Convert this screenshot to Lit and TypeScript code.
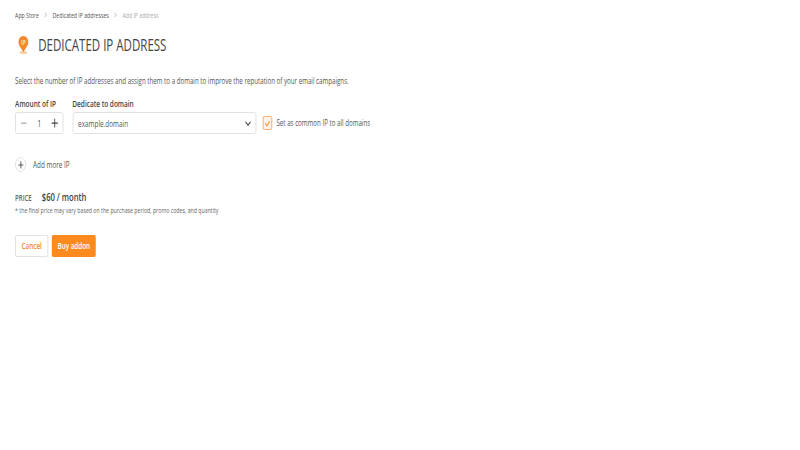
import { LitElement, html, css } from "lit";
import { customElement } from "lit/decorators.js";

@customElement("app-root")
export class AppRoot extends LitElement {
  static styles = css`
    :host { display: block; width: 800px; height: 450px; background: #fff; color: #444; font-family: "Open Sans", sans-serif; overflow: hidden; }
    .page { display: flex; flex-direction: column; align-items: flex-start; box-sizing: border-box; width: 1111px; padding: 10px 21px 0; transform: scale(.72, 1); transform-origin: 0 0; font-size: 9px; }
    .crumbs { display: flex; align-items: center; height: 10px; font-size: 7.2px; color: #555; gap: 7px; }
    .crumbs .last { color: #aaa; }
    .crumbs svg { width: 5px; height: 6px; }
    .head { display: flex; align-items: center; gap: 13px; margin-top: 15px; height: 20px; margin-left: 4px; }
    .head h1 { margin: 0; font-size: 16px; font-weight: 400; color: #444; }
    .intro { margin: 21px 0 0; font-size: 8.6px; line-height: 11px; color: #555; }
    .fields { display: flex; align-items: flex-end; gap: 12.5px; margin-top: 11px; }
    .field { display: flex; flex-direction: column; gap: 3px; }
    .field label { font-size: 9px; font-weight: 600; line-height: 11px; color: #444; }
    .stepper { display: flex; align-items: center; justify-content: space-between; box-sizing: border-box; width: 67px; height: 22px; border: 1px solid #ddd; border-radius: 3px; padding: 0 6px; font-size: 9px; }
    .stepper svg { width: 10px; height: 10px; }
    .select { display: flex; align-items: center; justify-content: space-between; box-sizing: border-box; width: 255px; height: 22px; border: 1px solid #ddd; border-radius: 3px; padding: 0 5px 0 7px; font-size: 8.9px; color: #555; }
    .select svg { width: 11px; height: 7px; }
    .common { display: flex; align-items: center; gap: 6px; height: 22px; margin-left: -3px; font-size: 8.6px; color: #555; }
    .box { display: flex; align-items: center; justify-content: center; box-sizing: border-box; width: 13px; height: 14px; border: 1px solid #f5a45c; border-radius: 2px; background: #fdf3e8; }
    .box svg { width: 9px; height: 7px; }
    .more { display: flex; align-items: center; gap: 10px; margin-top: 23px; font-size: 8.8px; color: #555; }
    .round { display: flex; align-items: center; justify-content: center; box-sizing: border-box; width: 15px; height: 15px; border: 1px solid #ddd; border-radius: 50%; }
    .round svg { width: 8px; height: 8px; }
    .price { display: flex; align-items: center; gap: 14px; margin-top: 18px; height: 14px; }
    .price span { font-size: 8.4px; font-weight: 600; color: #666; }
    .price strong { font-size: 10.6px; font-weight: 600; color: #444; }
    .note { margin: 1px 0 0; font-size: 7.25px; line-height: 10px; color: #666; }
    .actions { display: flex; gap: 5px; margin-top: 20px; }
    .actions div { display: flex; align-items: center; justify-content: center; box-sizing: border-box; height: 22px; border-radius: 2px; font-size: 8.8px; font-weight: 600; }
    .cancel { width: 46px; border: 1px solid #ddd; color: #f5882a; }
    .buy { width: 61px; background: #fd8a1f; color: #fff; }
  `;
  render() {
    const chev = html`<svg viewBox="0 0 4 6"><path d="M1 1l2 2-2 2" fill="none" stroke="#999" stroke-width=".7"/></svg>`;
    const plus = html`<svg viewBox="0 0 8 8"><path d="M4 .5v7M.5 4h7" stroke="#444" stroke-width="1" fill="none"/></svg>`;
    return html`<div class="page">
      <div class="crumbs"><span>App Store</span>${chev}<span>Dedicated IP addresses</span>${chev}<span class="last">Add IP address</span></div>
      <div class="head">
        <svg width="15" height="20" viewBox="0 0 15 20">
          <ellipse cx="7.5" cy="17.5" rx="5.5" ry="1.5" fill="#f8cfa6"/>
          <path d="M7.5 1C3.5 1 .7 3.800.7 7.200c0 3.800 5 6.800 6.800 10.300 1.800-3.500 6.800-6.500 6.800-10.300C14.300 3.800 11.500 1 7.500 1z" fill="#f08a2c"/>
          <text x="7.5" y="9.800" font-size="7" font-weight="700" text-anchor="middle" fill="#fbd9b5" font-family="Open Sans">IP</text>
        </svg>
        <h1>DEDICATED IP ADDRESS</h1>
      </div>
      <p class="intro">Select the number of IP addresses and assign them to a domain to improve the reputation of your email campaigns.</p>
      <div class="fields">
        <div class="field"><label>Amount of IP</label>
          <div class="stepper"><svg viewBox="0 0 8 8"><path d="M1 4h6" stroke="#aaa" stroke-width="1"/></svg><span>1</span>${plus}</div></div>
        <div class="field"><label>Dedicate to domain</label>
          <div class="select"><span>example.domain</span><svg viewBox="0 0 8 6"><path d="M1 1.5l3 3 3-3" fill="none" stroke="#555" stroke-width="1.2"/></svg></div></div>
        <div class="common"><div class="box"><svg viewBox="0 0 7 6"><path d="M1 3l2 2 3-4" fill="none" stroke="#f0922f" stroke-width="1.1"/></svg></div><span>Set as common IP to all domains</span></div>
      </div>
      <div class="more"><div class="round">${plus}</div><span>Add more IP</span></div>
      <div class="price"><span>PRICE</span><strong>$60 / month</strong></div>
      <p class="note">* the final price may vary based on the purchase period, promo codes, and quantity</p>
      <div class="actions"><div class="cancel">Cancel</div><div class="buy">Buy addon</div></div>
    </div>`;
  }
}
